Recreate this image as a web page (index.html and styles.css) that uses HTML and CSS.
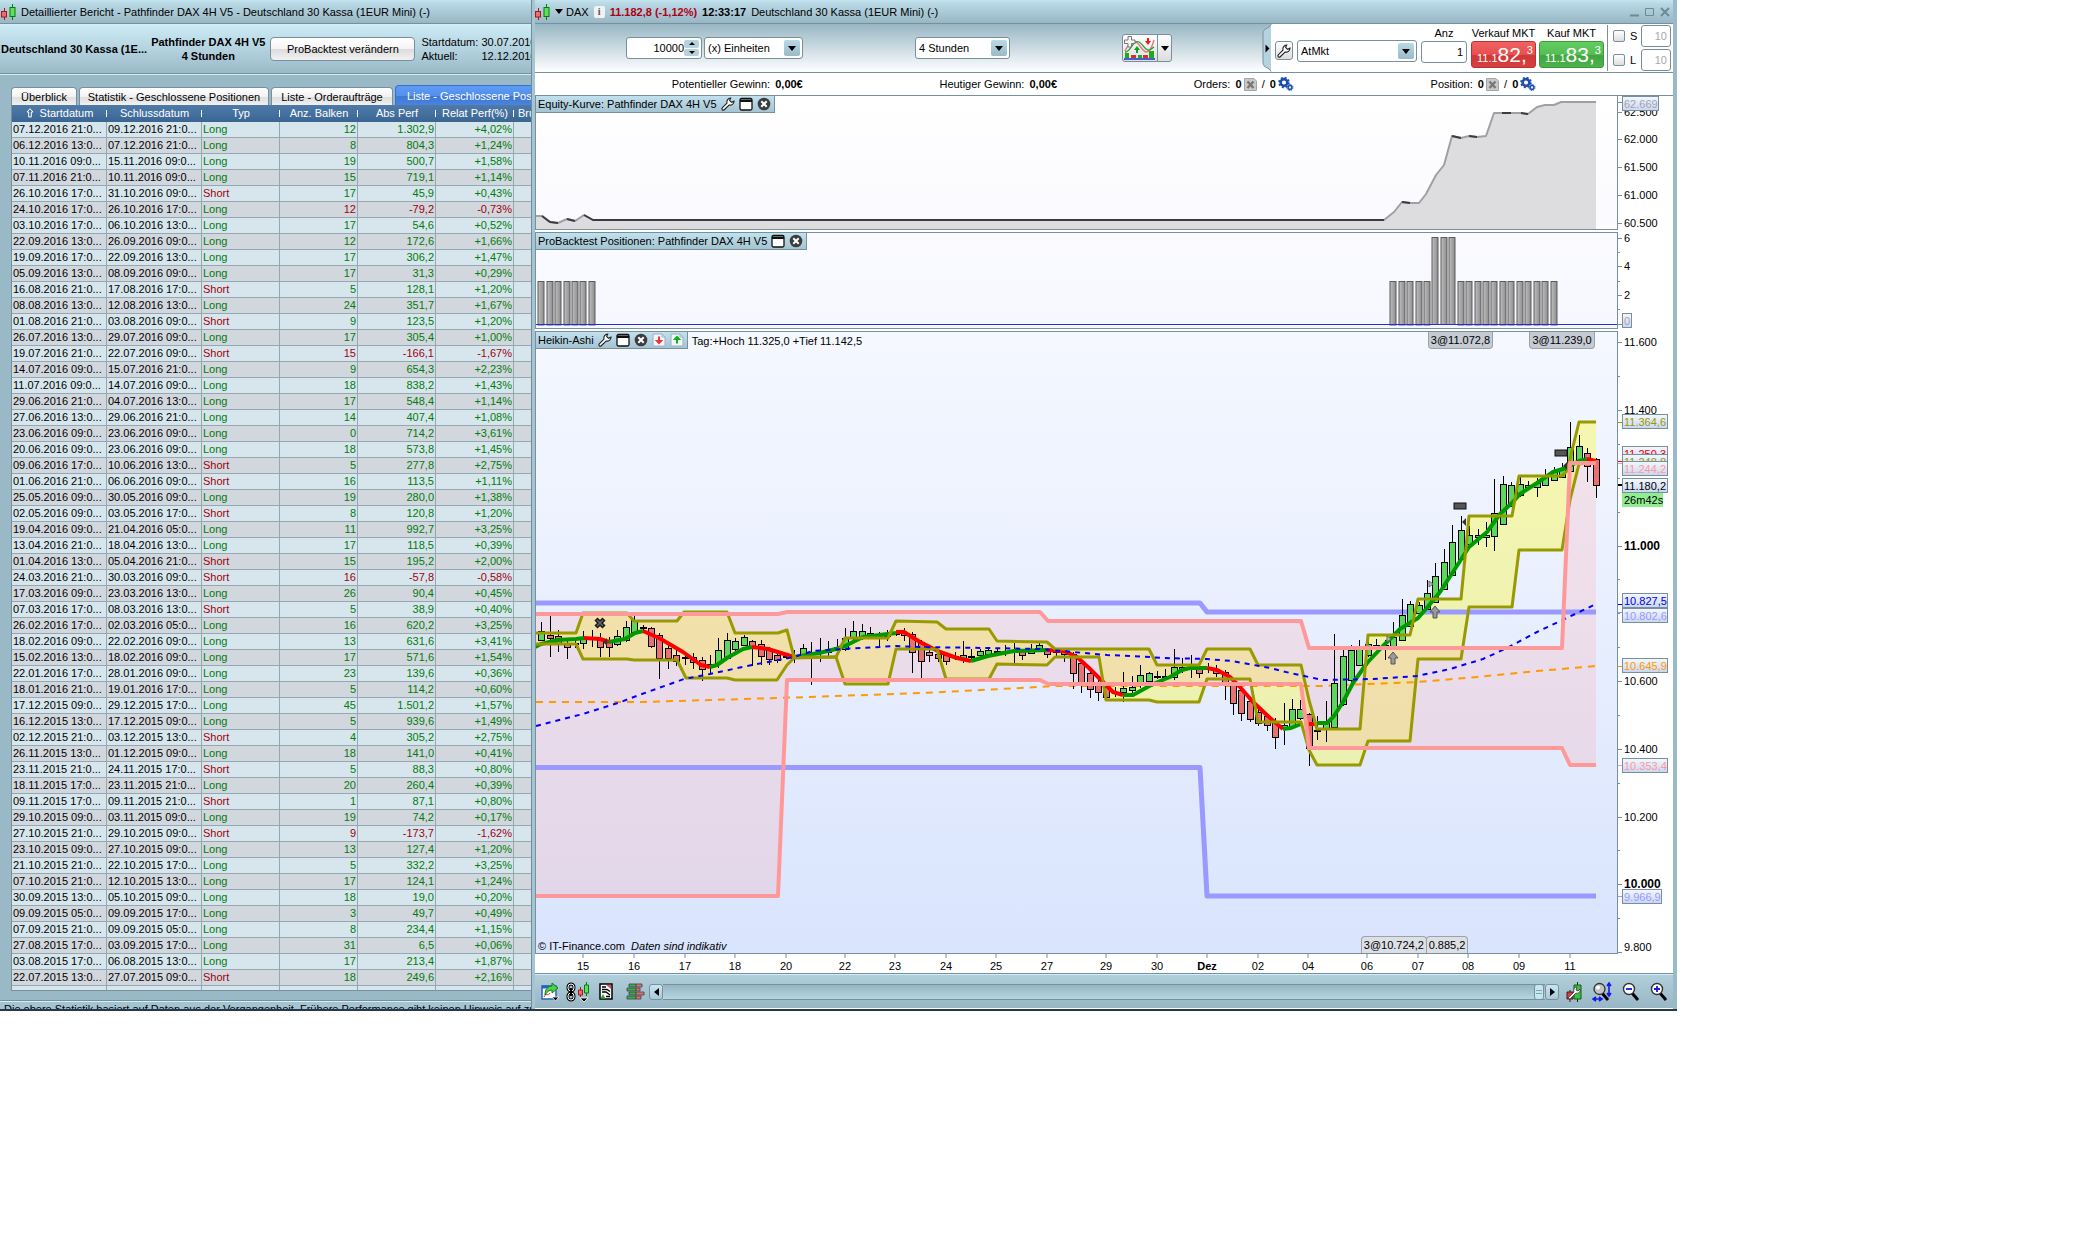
FILE: index.html
```html
<!DOCTYPE html>
<html lang="de">
<head>
<meta charset="utf-8">
<title>DAX - Deutschland 30 Kassa</title>
<link rel="stylesheet" href="styles.css">
</head>
<body>
<svg class="sprite" aria-hidden="true">
  <symbol id="i-candles" viewBox="0 0 15 16"><path d="M3.500 4v12" stroke="#a01820"/><rect x=".5" y="7.500" width="5" height="5.500" fill="#f26a6a" stroke="#a01820"/><path d="M11.500 0v16" stroke="#0a7a10"/><rect x="9" y="3.500" width="5" height="9" fill="#5fe05a" stroke="#0a7a10"/></symbol>
  <symbol id="i-wrench" viewBox="0 0 14 14"><path d="M1.200 12.800c-.6-.9-.4-1.500.3-2.200L6 6.100C5.400 3.500 7 1.200 9.700 1L8.600 3.400l1.900 1.900L13 4.200c0 2.700-2.300 4.400-4.900 3.800l-4.600 4.500c-.8.8-1.600.9-2.300.3z" fill="#fff" stroke="#222" stroke-width="1.100"/></symbol>
  <symbol id="i-window" viewBox="0 0 14 14"><rect x="1" y="1.500" width="12" height="11.500" rx="1.500" fill="#fff" stroke="#111" stroke-width="1.300"/><path d="M1 2.500h12v2.500H1z" fill="#111"/></symbol>
  <symbol id="i-close" viewBox="0 0 14 14"><circle cx="7" cy="7" r="6.300" fill="#3c3c3c"/><path d="M4.300 4.300l5.400 5.400M9.700 4.300l-5.400 5.400" stroke="#fff" stroke-width="2"/></symbol>
  <symbol id="i-down-red" viewBox="0 0 14 14"><path d="M1 1h9l3 3v9H1z" fill="#f2f6fb" stroke="#9fb0c4"/><path d="M10 1v3h3" fill="none" stroke="#9fb0c4"/><path d="M7 11.500L2.800 7H6V3.500h2V7h3.200z" fill="#ee3434"/></symbol>
  <symbol id="i-up-green" viewBox="0 0 14 14"><path d="M1 1h9l3 3v9H1z" fill="#f2f6fb" stroke="#9fb0c4"/><path d="M10 1v3h3" fill="none" stroke="#9fb0c4"/><path d="M7 2.500L11.200 7H8v3.500H6V7H2.800z" fill="#10b010"/></symbol>
  <symbol id="i-sheet" viewBox="0 0 13 13"><path d="M.5.5h9.500l2.500 2.500v9.500H.5z" fill="#c9c9c9" stroke="#a4a4a4"/><path d="M3.500 3.500l6 6.500M9.500 3.500l-6 6.500" stroke="#777" stroke-width="2.400"/></symbol>
  <symbol id="i-gears" viewBox="0 0 16 14"><circle cx="6" cy="5.500" r="3.400" fill="none" stroke="#1b4fae" stroke-width="2.600"/><circle cx="6" cy="5.500" r="5" fill="none" stroke="#1b4fae" stroke-width="1.600" stroke-dasharray="2 1.930"/><circle cx="12" cy="10.500" r="1.900" fill="#e6efff" stroke="#1b4fae" stroke-width="1.500"/><circle cx="12" cy="10.500" r="3" fill="none" stroke="#1b4fae" stroke-width="1" stroke-dasharray="1.300 1.060"/></symbol>
</svg>

<main class="workspace">
  <section class="report" aria-label="Detaillierter Bericht">
    <header class="titlebar">
      <svg class="candles"><use href="#i-candles"/></svg>
      <span>Detaillierter Bericht - Pathfinder DAX 4H V5 - Deutschland 30 Kassa (1EUR Mini) (-)</span>
    </header>
    <div class="report-head">
      <strong>Deutschland 30 Kassa (1E...</strong>
      <strong class="system">Pathfinder DAX 4H V5<br>4 Stunden</strong>
      <button class="modify" type="button">ProBacktest verändern</button>
      <dl class="dates"><dt>Startdatum:</dt><dd>30.07.2010</dd><dt>Aktuell:</dt><dd>12.12.2016</dd></dl>
    </div>
    <div class="report-body">
      <div class="tabs" role="tablist">
        <button role="tab" type="button" class="tab tab-a">Überblick</button>
        <button role="tab" type="button" class="tab tab-b">Statistik - Geschlossene Positionen</button>
        <button role="tab" type="button" class="tab tab-c">Liste - Orderaufträge</button>
        <button role="tab" type="button" class="tab active" aria-selected="true">Liste - Geschlossene Positionen</button>
      </div>
      <div class="table-box">
        <table>
          <colgroup><col class="c-date"><col class="c-date"><col class="c-num"><col class="c-num"><col class="c-num"><col class="c-num"><col class="c-num"></colgroup>
          <thead><tr><th><svg class="sort" viewBox="0 0 8 10"><path d="M4 .7l3 3.300H5.300V9H2.700V4H1z" fill="none" stroke="#fff"/></svg>Startdatum</th><th>Schlussdatum</th><th>Typ</th><th>Anz. Balken</th><th>Abs Perf</th><th>Relat Perf(%)</th><th class="cut">Bruttogewinn</th></tr></thead>
          <tbody id="trades"></tbody>
        </table>
      </div>
    </div>
    <footer class="disclaimer">Die obere Statistik basiert auf Daten aus der Vergangenheit. Frühere Performance gibt keinen Hinweis auf zukünftige Ergebnisse.</footer>
  </section>

  <section class="chart-window" aria-label="DAX Chart">
    <header class="titlebar">
      <svg class="candles"><use href="#i-candles"/></svg>
      <span class="tri"></span>
      <span>DAX</span>
      <span class="info">i</span>
      <b class="down">11.182,8 (-1,12%)</b>
      <b>12:33:17</b>
      <span>Deutschland 30 Kassa (1EUR Mini) (-)</span>
      <span class="win-buttons">
        <button type="button" aria-label="Minimieren"><svg viewBox="0 0 10 10"><path d="M0 8.500h9" stroke="#6d8a96" stroke-width="2"/></svg></button>
        <button type="button" aria-label="Maximieren"><svg viewBox="0 0 10 10"><path d="M.5 1.500h8v7h-8z" fill="none" stroke="#6d8a96"/></svg></button>
        <button type="button" aria-label="Schließen"><svg viewBox="0 0 10 10"><path d="M1 1l8 8M9 1l-8 8" stroke="#6d8a96" stroke-width="2"/></svg></button>
      </span>
    </header>

    <div class="toolbar">
      <div class="chart-tools">
        <div class="units">
          <span class="spin field"><input aria-label="Anzahl" value="10000"><span class="steps"><button type="button" aria-label="mehr"><i class="up"></i></button><button type="button" aria-label="weniger"><i class="dn"></i></button></span></span>
          <span class="pick field w-unit"><select aria-label="Einheit"><option>(x) Einheiten</option></select></span>
        </div>
        <span class="pick field w-time"><select aria-label="Zeitrahmen"><option>4 Stunden</option></select></span>
        <button class="indicator" type="button" aria-label="Indikatoren">
          <svg viewBox="0 0 34 26"><path d="M2 16C8 4 13 5 17 11s9 12 14-6" fill="none" stroke="#e08080" stroke-width="1.500"/><path d="M2 17c6 0 8-13 14-10s6 13 15 5" fill="none" stroke="#2a9a30" stroke-width="1.300"/><path d="M5 1.500h3.500V5H12v3.500H8.500V12H5V8.500H1.500V5H5z" fill="#f4f4f4" stroke="#777"/><path d="M24 3h2v3h2l-3 4-3-4h2z" fill="#f01818"/><path d="M13 18v-3h-2l3-4 3 4h-2v3z" fill="#0fa018"/><path d="M2 18h4v5H2zM15 20h4v3h-4zM26 16h5v7h-5z" fill="#1caa20"/><path d="M8 20h5v3H8zM20 20h5v3h-5z" fill="#d03030"/><path d="M1 24h31" stroke="#2030c0" stroke-width="1.500"/></svg>
          <span class="more"><i class="dn big"></i></span>
        </button>
      </div>
      <div class="trade">
        <svg class="handle" viewBox="0 0 16 47" aria-hidden="true"><path d="M9 0C7 5 1 3 1 9v29c0 6 6 4 8 9h7V0z" fill="#fff"/><path d="M9 0C7 5 1 3 1 9v29c0 6 6 4 8 9z" fill="#b4d3df"/><path d="M9 0C7 5 1 3 1 9v29c0 6 6 4 8 9" fill="none" stroke="#76919d"/><path d="M3.500 20v8l4-4z" fill="#000"/></svg>
        <button class="tool" type="button" aria-label="Einstellungen"><svg viewBox="0 0 14 14"><use href="#i-wrench"/></svg></button>
        <span class="pick field w-order"><select aria-label="Ordertyp"><option>AtMkt</option></select></span>
        <label class="col qty">Anz<input class="field" value="1"></label>
        <div class="col"><span>Verkauf MKT</span><button class="deal sell" type="button"><small>11.1</small>82,<sup>3</sup></button></div>
        <div class="col"><span>Kauf MKT</span><button class="deal buy" type="button"><small>11.1</small>83,<sup>3</sup></button></div>
        <div class="stops">
          <div><input type="checkbox" id="st"><label for="st">S</label><input class="field" aria-label="Stop" value="10" disabled></div>
          <div><input type="checkbox" id="lm"><label for="lm">L</label><input class="field" aria-label="Limit" value="10" disabled></div>
        </div>
      </div>
    </div>

    <div class="status">
      <span>Potentieller Gewinn: <b>0,00€</b></span>
      <span>Heutiger Gewinn: <b>0,00€</b></span>
      <span>Orders: <b>0</b><svg class="ic-sheet"><use href="#i-sheet"/></svg> / <b>0</b><svg class="ic-gears"><use href="#i-gears"/></svg></span>
      <span>Position: <b>0</b><svg class="ic-sheet"><use href="#i-sheet"/></svg> / <b>0</b><svg class="ic-gears"><use href="#i-gears"/></svg></span>
    </div>

    <div class="pane equity">
      <div class="plot"><svg id="equity" viewBox="536 96 1081 133" preserveAspectRatio="none"></svg>
        <div class="legend">Equity-Kurve: Pathfinder DAX 4H V5<svg><use href="#i-wrench"/></svg><svg><use href="#i-window"/></svg><svg><use href="#i-close"/></svg></div>
      </div>
      <svg class="axis" id="axis1" viewBox="1617 96 55 136"></svg>
    </div>
    <div class="pane positions">
      <div class="plot"><svg id="positions" viewBox="536 233 1081 95" preserveAspectRatio="none"></svg>
        <div class="legend">ProBacktest Positionen: Pathfinder DAX 4H V5<svg><use href="#i-window"/></svg><svg><use href="#i-close"/></svg></div>
      </div>
      <svg class="axis" id="axis2" viewBox="1617 233 55 98"></svg>
    </div>
    <div class="pane price">
      <div class="plot"><svg id="price" viewBox="536 332 1081 621" preserveAspectRatio="none"></svg>
        <div class="legend-row"><div class="legend">Heikin-Ashi<svg><use href="#i-wrench"/></svg><svg><use href="#i-window"/></svg><svg><use href="#i-close"/></svg><svg><use href="#i-down-red"/></svg><svg><use href="#i-up-green"/></svg></div><span>Tag:+Hoch 11.325,0 +Tief 11.142,5</span></div>
        <span class="fill top f1">3@11.072,8</span><span class="fill top f2">3@11.239,0</span>
        <span class="fill bottom f4">0.885,2</span><span class="fill bottom f3">3@10.724,2</span>
        <div class="credit">© IT-Finance.com&nbsp; <em>Daten sind indikativ</em></div>
      </div>
      <svg class="axis" id="axis3" viewBox="1617 332 55 622"></svg>
    </div>
    <svg class="time-axis" id="days"></svg>

    <div class="bottom-bar">
      <button class="plain" type="button" aria-label="Exportieren"><svg width="20" height="20" viewBox="0 0 20 20"><path d="M2 4h14v13H2z" fill="#fff" stroke="#2a62c0" stroke-width="1.500"/><path d="M2 5h14" stroke="#2a62c0" stroke-width="3"/><path d="M4 15c2-5 4 0 6-4" fill="none" stroke="#d03030"/><path d="M5 13C5 7 8 4 12 4V1l6 5-6 5V8c-3 0-5 2-7 5z" fill="#4ed24c" stroke="#137a15"/><path d="M12 15h7l-3.500 4z" fill="#000" stroke="#fff" stroke-width=".8"/></svg></button>
      <button class="plain" type="button" aria-label="Verknüpfen"><svg width="24" height="20" viewBox="0 0 24 20"><rect x="2" y="2" width="6" height="7" rx="3" fill="none" stroke="#000" stroke-width="3"/><rect x="2" y="11" width="6" height="7" rx="3" fill="none" stroke="#000" stroke-width="3"/><rect x="2" y="2" width="6" height="7" rx="3" fill="none" stroke="#fff"/><rect x="2" y="11" width="6" height="7" rx="3" fill="none" stroke="#fff"/><path d="M5 6v8" stroke="#000" stroke-width="2"/><path d="M14.500 5v10" stroke="#a01820"/><path d="M12.500 8h4v5h-4z" fill="#f26a6a" stroke="#a01820"/><path d="M20.500 0v14" stroke="#0a7a10"/><path d="M18.500 3h4v8h-4z" fill="#5fe05a" stroke="#0a7a10"/><path d="M14 16h8l-4 4z" fill="#000" stroke="#fff" stroke-width=".8"/></svg></button>
      <button class="plain gap-s" type="button" aria-label="Liste"><svg width="14" height="17" viewBox="0 0 14 17"><path d="M1 1h12v15H1z" fill="#fff" stroke="#000" stroke-width="1.500"/><path d="M3 4h4M3 6.500h5l3 2M3 9h4l4 3M7 13.500h4" fill="none" stroke="#000" stroke-width="1.400"/><path d="M7 2h5v4z" fill="#e05050"/><path d="M1.500 15.500h5L4 11z" fill="#2aaa2a"/></svg></button>
      <button class="plain gap-m" type="button" aria-label="Orderbuch"><svg width="19" height="18" viewBox="0 0 19 18"><path d="M3 1h7v3H3zM1 5h9v3H1zM3 9h7v3H3zM1 13h9v3H1z" fill="#33b04a" stroke="#4a4a4a" stroke-width=".9"/><path d="M10 1h6v3h-6zM10 5h4v3h-4zM10 9h8v3h-8zM10 13h5v3h-5z" fill="#e07070" stroke="#4a4a4a" stroke-width=".9"/></svg></button>
      <div class="scroll"><button type="button" aria-label="zurück"><i class="lf"></i></button><div class="track"><span class="thumb"></span></div><button type="button" aria-label="vor"><i class="rt"></i></button></div>
      <button class="plain" type="button" aria-label="Chart einstellen"><svg width="16" height="20" viewBox="0 0 16 20"><path d="M4 8v12M11.500 0v20" stroke="#222"/><path d="M1 10h6v7H1z" fill="#d04040" stroke="#5a1515"/><path d="M8 3h7v14H8z" fill="#3fbf45" stroke="#145a18"/><path d="M2 16l6-6c-1-3 1-5 3-5l-1 3 2 1 2-2c1 3-2 5-4 4l-6 6z" fill="#fff" stroke="#333" stroke-width=".8"/></svg></button>
      <button class="plain gap-z" type="button" aria-label="Automatisch zoomen"><svg width="20" height="20" viewBox="0 0 20 20"><path d="M10 11l6 7" stroke="#000" stroke-width="3"/><circle cx="7.500" cy="7" r="5.500" fill="#c4c4c4" stroke="#333" stroke-width="1.300"/><circle cx="6" cy="5.500" r="2" fill="#fff"/><path d="M17 1v12M15 4l2-3 2 3M15 11l2 3 2-3M1 17h9M4 15l-3 2 3 2M7 15l3 2-3 2" fill="none" stroke="#1418e8" stroke-width="1.600"/></svg></button>
      <button class="plain gap-z" type="button" aria-label="Verkleinern"><svg width="18" height="20" viewBox="0 0 18 20"><path d="M10 11l6 7" stroke="#000" stroke-width="3"/><circle cx="7" cy="7" r="5.500" fill="#fff" stroke="#333" stroke-width="1.400"/><path d="M4 7h6" stroke="#1418e8" stroke-width="1.800"/></svg></button>
      <button class="plain gap-z" type="button" aria-label="Vergrößern"><svg width="18" height="20" viewBox="0 0 18 20"><path d="M10 11l6 7" stroke="#000" stroke-width="3"/><circle cx="7" cy="7" r="5.500" fill="#fff" stroke="#333" stroke-width="1.400"/><path d="M4 7h6M7 4v6" stroke="#1418e8" stroke-width="1.800"/></svg></button>
    </div>
  </section>
</main>
<script src="app.js"></script>
</body>
</html>
```
FILE: styles.css
```css
* { box-sizing: border-box; }
body { margin: 0; background: #fff; color: #000; font: 11px/14px "Liberation Sans", Arial, sans-serif; }
button, input, select { font: inherit; color: inherit; margin: 0; padding: 0; }
button { cursor: pointer; border: 0; background: none; }
.sprite { display: none; }
svg { display: block; }

.workspace { display: flex; margin-right: 423px; border-bottom: 2px solid #26384c; }

.titlebar { display: flex; align-items: center; gap: 5px; height: 24px; border-bottom: 1px solid #76919d; background: linear-gradient(#c4e4f0, #b7d6e3 20%, #98b6c3); white-space: nowrap; }
.candles { width: 15px; height: 16px; flex: none; }

/* report window */
.report { flex: 0 0 532px; height: 1009px; overflow: hidden; display: flex; flex-direction: column; background: #9ab9c7; border-right: 1px solid #6f8c98; }
.report .titlebar { padding-left: 1px; flex: none; }
.report-head { flex: none; height: 50px; display: flex; align-items: center; border-top: 1px solid #d4eef8; border-bottom: 1px solid #76919d; background: linear-gradient(#cdebf7, #9bbac7); white-space: nowrap; padding-left: 1px; }
.system { text-align: center; margin: 0 5px 0 4px; }
.modify { flex: none; width: 145px; height: 24px; border: 1px solid #76919d; border-radius: 4px; background: linear-gradient(#fff, #f4f4f4 50%, #dcdcdc 52%, #f2f2f2); }
.dates { display: grid; grid-template-columns: 60px auto; margin: 0 0 0 6px; }
.dates dd { margin: 0; }
.report-body { flex: none; height: 926px; padding: 10px 0 0 11px; border-top: 1px solid #d4eef8; }
.tabs { display: flex; align-items: flex-end; height: 20px; gap: 2px; white-space: nowrap; }
.tab { flex: none; height: 18px; border: 1px solid #76919d; border-bottom: 0; border-radius: 4px 4px 0 0; background: linear-gradient(#fff, #f2f2f2 50%, #dedede 52%, #f0f0f0); }
.tab-a { width: 66px; }
.tab-b { width: 190px; }
.tab-c { width: 122px; }
.tab.active { height: 20px; padding: 0 11px; color: #fff; border-color: #3a6fd0; background: linear-gradient(#5c9cf5, #5590ec 50%, #3f78d4 52%, #4a84e0); }
.table-box { height: 886px; overflow: hidden; border-left: 1px solid #76919d; border-bottom: 1px solid #76919d; }
table { border-collapse: separate; border-spacing: 0; table-layout: fixed; width: 580px; }
.c-date { width: 95px; }
.c-num { width: 78px; }
th, td { height: 16px; padding: 0 1px; line-height: 15px; white-space: nowrap; overflow: hidden; }
th { position: relative; height: 17px; color: #fff; font-weight: 400; text-align: center; background: linear-gradient(#4f7aa6, #4571a0 50%, #3a6591); }
th::after { content: ""; position: absolute; right: 0; top: 5px; width: 1px; height: 7px; background: #fff; }
th.cut { text-align: left; padding-left: 4px; }
.sort { display: inline-block; width: 8px; height: 10px; margin-right: 6px; vertical-align: -1px; }
td { border-right: 1px solid #93a8b3; border-bottom: 1px solid #93a8b3; color: #007c0c; }
td:nth-child(-n+2) { color: #000; }
td:nth-child(n+4) { text-align: right; }
tbody tr:nth-child(odd) { background: #d7e6ed; }
tbody tr:nth-child(even) { background: #d1d7dd; }
td.neg { color: #a0000f; }
.disclaimer { flex: none; height: 20px; padding: 1px 4px; border-top: 1px solid #76919d; background: #a4c4d1; white-space: nowrap; box-shadow: inset 0 1px #d4eef8; }

/* chart window */
.chart-window { flex: 1; min-width: 0; border-left: 3px solid #a5c5d2; border-right: 4px solid #9bbac7; background: #fff; }
.tri { border: 4px solid transparent; border-top: 5px solid #000; border-bottom: 0; margin-right: -2px; }
.info { width: 11px; height: 12px; border-radius: 2px; background: #f2f2f2; color: #555; font: bold 10px/12px "Liberation Serif", serif; text-align: center; }
.down { color: #b00010; }
.win-buttons { margin-left: auto; display: flex; gap: 5px; padding-right: 3px; }
.win-buttons svg { width: 10px; height: 10px; }

.toolbar { display: flex; align-items: center; justify-content: space-between; height: 49px; padding-left: 91px; border-bottom: 1px solid #76919d; background: linear-gradient(#98b7c4, #fff); }
.chart-tools { flex: none; display: flex; align-items: center; gap: 112px; }
.units { display: flex; gap: 2px; }
.field { height: 22px; border: 1px solid #76919d; border-radius: 3px; background: #fff; }
.field input, .field select { border: 0; outline: 0; background: transparent; width: 100%; height: 20px; }
.spin { display: flex; width: 76px; }
.spin input { width: 57px; text-align: right; }
.steps { width: 15px; display: grid; gap: 1px; padding: 2px 0; }
.steps button { background: #b4d3df; border-radius: 2px; display: grid; place-items: center; }
.pick { position: relative; display: block; flex: none; }
.pick select { appearance: none; padding-left: 3px; }
.pick::before { content: ""; position: absolute; right: 2px; top: 2px; width: 16px; height: 16px; border-radius: 2px; background: linear-gradient(#b9d9e6, #9bbac7); pointer-events: none; }
.pick::after { content: ""; position: absolute; right: 6px; top: 8px; border: 4px solid transparent; border-top: 5px solid #000; border-bottom: 0; pointer-events: none; }
.w-unit { width: 99px; }
.w-time { width: 95px; }
.w-order { width: 120px; margin: 0 4px 10px; }
i { display: block; border: 3px solid transparent; width: 0; height: 0; }
i.up { border-bottom: 3px solid #000; border-top: 0; }
i.dn { border-top: 3px solid #000; border-bottom: 0; }
i.big { border-width: 5px 4px 0; }
i.lf { border: 4px solid transparent; border-right: 5px solid #000; border-left: 0; margin: auto; }
i.rt { border: 4px solid transparent; border-left: 5px solid #000; border-right: 0; margin: auto; }
.indicator { flex: none; display: flex; width: 50px; height: 28px; border: 1px solid #76919d; border-radius: 3px; background: linear-gradient(#fff, #ddd); }
.indicator svg { width: 34px; height: 26px; }
.more { flex: 1; border-left: 1px solid #76919d; display: grid; place-items: center; height: 26px; }

.trade { flex: none; display: flex; align-items: flex-end; width: 411px; height: 48px; background: linear-gradient(90deg, transparent 10px, #fff 10px); }
.handle { width: 16px; height: 48px; margin-right: -3px; }
.tool { width: 18px; height: 19px; margin-bottom: 12px; border: 1px solid #76919d; border-radius: 3px; background: linear-gradient(#fff, #ddd); display: grid; place-items: center; }
.tool svg { width: 14px; height: 14px; }
.col { display: flex; flex-direction: column; align-items: center; gap: 1px; height: 46px; white-space: nowrap; margin-left: 3px; }
.qty { width: 46px; margin: 0 1px 0 0; }
.qty input { width: 46px; text-align: right; padding-right: 3px; }
.deal { width: 65px; height: 27px; border-radius: 3px; color: #fff; font-size: 21px; line-height: 26px; text-align: left; padding-left: 5px; white-space: nowrap; }
.deal small, .deal sup { font-size: 11px; line-height: 11px; }
.deal sup { vertical-align: 8px; }
.sell { background: linear-gradient(#f06262, #e85050 50%, #d03838 52%, #d84040); border: 1px solid #c03030; }
.buy { background: linear-gradient(#62cc62, #54be54 50%, #40a440 52%, #4cb44c); border: 1px solid #3a9a3a; }
.stops { align-self: center; display: grid; gap: 2px; margin-left: 3px; padding-left: 5px; border-left: 1px solid #76919d; height: 46px; }
.stops div { display: flex; align-items: center; }
.stops input[type=checkbox] { appearance: none; width: 12px; height: 12px; border: 1px solid #76919d; border-radius: 2px; background: linear-gradient(#fff, #ddd); }
.stops label { width: 16px; padding-left: 5px; }
.stops input.field { width: 30px; text-align: right; padding-right: 3px; color: #a8a8a8; }

.status { display: flex; justify-content: space-evenly; align-items: center; height: 23px; border-bottom: 1px solid #76919d; white-space: pre; }
.status span { display: flex; align-items: center; gap: 2px; }
.ic-sheet { width: 13px; height: 13px; }
.ic-gears { width: 16px; height: 14px; }

.pane { display: flex; }
.plot { position: relative; flex: 1; min-width: 0; border: 1px solid #76919d; border-top: 0; }
.plot > svg { width: 100%; height: 100%; }
.axis { flex: none; width: 55px; font-size: 11px; }
.equity .plot { height: 134px; background: linear-gradient(#fff, #fafaff); }
.equity { height: 136px; }
.equity .axis { height: 136px; }
.positions .plot, .price .plot { border-top: 1px solid #76919d; }
.positions { height: 99px; }
.positions .plot { height: 97px; background: linear-gradient(#fafaff, #f6f8ff); }
.positions .axis { height: 98px; margin-top: 1px; }
.price { height: 623px; }
.price .plot { background: linear-gradient(#f5f8ff, #d9e4fd); }
.price .axis { height: 622px; margin-top: 1px; }
.legend { position: absolute; left: 0; top: 0; display: flex; align-items: center; gap: 4px; height: 17px; padding: 0 3px 0 2px; border: solid #76919d; border-width: 0 1px 1px 0; background: linear-gradient(#c2e1ee, #a4c4d1); white-space: nowrap; }
.legend svg { width: 14px; height: 14px; }
.price .legend svg { width: 14px; }
.legend-row { position: absolute; left: 0; top: 0; display: flex; align-items: center; gap: 4px; white-space: nowrap; }
.legend-row .legend { position: static; }
.fill { position: absolute; height: 17px; padding: 0 2px; line-height: 16px; border: 1px solid #9aa3aa; }
.top { top: 0; border-top: 0; border-radius: 0 0 4px 4px; background: #c5cad3; }
.bottom { bottom: 0; border-bottom: 0; border-radius: 4px 4px 0 0; background: #dcdfe4; }
.f1 { left: 82.500%; }
.f2 { left: 91.900%; }
.f3 { left: 76.300%; }
.f4 { left: 82.300%; }
.credit { position: absolute; left: 2px; bottom: 0; }
.time-axis { width: 100%; height: 20px; font-size: 11px; border-bottom: 1px solid #76919d; }

.bottom-bar { display: flex; align-items: center; height: 34px; padding: 0 5px; border-top: 1px solid #d4eef8; background: linear-gradient(#b0cfdb, #98b6c3); }
.plain { flex: none; margin-right: 6px; }
.gap-s { margin-left: 3px; margin-right: 9px; }
.gap-m { margin-left: 4px; margin-right: 4px; }
.gap-z { margin-left: 4px; }
.bottom-bar .plain:last-child { margin-right: 0; }
.scroll { flex: 1; display: flex; height: 16px; margin-right: 7px; }
.scroll button { width: 14px; border: 1px solid #76919d; border-radius: 3px; background: linear-gradient(#c8e6f2, #a9c9d6); }
.track { flex: 1; display: flex; justify-content: flex-end; border: solid #76919d; border-width: 1px 0; background: linear-gradient(#96b5c2, #b6d6e2); }
.thumb { width: 10px; margin: -1px 1px -1px 0; border: 1px solid #76919d; border-radius: 3px; background: repeating-linear-gradient(#c8e6f2 0 2px, #86a3b0 2px 3px) content-box, #c8e6f2; padding: 3px 1px; }
```
FILE: app.js
```js
// start | end | type | bars | absolute | relative
const TRADES = `07.12.2016 21|09.12.2016 21|L|12|1.302,9|+4,02
06.12.2016 13|07.12.2016 21|L|8|804,3|+1,24
10.11.2016 09|15.11.2016 09|L|19|500,7|+1,58
07.11.2016 21|10.11.2016 09|L|15|719,1|+1,14
26.10.2016 17|31.10.2016 09|S|17|45,9|+0,43
24.10.2016 17|26.10.2016 17|L|12|-79,2|-0,73
03.10.2016 17|06.10.2016 13|L|17|54,6|+0,52
22.09.2016 13|26.09.2016 09|L|12|172,6|+1,66
19.09.2016 17|22.09.2016 13|L|17|306,2|+1,47
05.09.2016 13|08.09.2016 09|L|17|31,3|+0,29
16.08.2016 21|17.08.2016 17|S|5|128,1|+1,20
08.08.2016 13|12.08.2016 13|L|24|351,7|+1,67
01.08.2016 21|03.08.2016 09|S|9|123,5|+1,20
26.07.2016 13|29.07.2016 09|L|17|305,4|+1,00
19.07.2016 21|22.07.2016 09|S|15|-166,1|-1,67
14.07.2016 09|15.07.2016 21|L|9|654,3|+2,23
11.07.2016 09|14.07.2016 09|L|18|838,2|+1,43
29.06.2016 21|04.07.2016 13|L|17|548,4|+1,14
27.06.2016 13|29.06.2016 21|L|14|407,4|+1,08
23.06.2016 09|23.06.2016 09|L|0|714,2|+3,61
20.06.2016 09|23.06.2016 09|L|18|573,8|+1,45
09.06.2016 17|10.06.2016 13|S|5|277,8|+2,75
01.06.2016 21|06.06.2016 09|S|16|113,5|+1,11
25.05.2016 09|30.05.2016 09|L|19|280,0|+1,38
02.05.2016 09|03.05.2016 17|S|8|120,8|+1,20
19.04.2016 09|21.04.2016 05|L|11|992,7|+3,25
13.04.2016 21|18.04.2016 13|L|17|118,5|+0,39
01.04.2016 13|05.04.2016 21|S|15|195,2|+2,00
24.03.2016 21|30.03.2016 09|S|16|-57,8|-0,58
17.03.2016 09|23.03.2016 13|L|26|90,4|+0,45
07.03.2016 17|08.03.2016 13|S|5|38,9|+0,40
26.02.2016 17|02.03.2016 05|L|16|620,2|+3,25
18.02.2016 09|22.02.2016 09|L|13|631,6|+3,41
15.02.2016 13|18.02.2016 09|L|17|571,6|+1,54
22.01.2016 17|28.01.2016 09|L|23|139,6|+0,36
18.01.2016 21|19.01.2016 17|L|5|114,2|+0,60
17.12.2015 09|29.12.2015 17|L|45|1.501,2|+1,57
16.12.2015 13|17.12.2015 09|L|5|939,6|+1,49
02.12.2015 21|03.12.2015 13|S|4|305,2|+2,75
26.11.2015 13|01.12.2015 09|L|18|141,0|+0,41
23.11.2015 21|24.11.2015 17|S|5|88,3|+0,80
18.11.2015 17|23.11.2015 21|L|20|260,4|+0,39
09.11.2015 17|09.11.2015 21|S|1|87,1|+0,80
29.10.2015 09|03.11.2015 09|L|19|74,2|+0,17
27.10.2015 21|29.10.2015 09|S|9|-173,7|-1,62
23.10.2015 09|27.10.2015 09|L|13|127,4|+1,20
21.10.2015 21|22.10.2015 17|L|5|332,2|+3,25
07.10.2015 21|12.10.2015 13|L|17|124,1|+1,24
30.09.2015 13|05.10.2015 09|L|18|19,0|+0,20
09.09.2015 05|09.09.2015 17|L|3|49,7|+0,49
07.09.2015 21|09.09.2015 05|L|8|234,4|+1,15
27.08.2015 17|03.09.2015 17|L|31|6,5|+0,06
03.08.2015 17|06.08.2015 13|L|17|213,4|+1,87
22.07.2015 13|27.07.2015 09|S|18|249,6|+2,16`.split("\n").map(r => r.split("|"));

document.getElementById("trades").innerHTML = TRADES.map(([a, b, t, n, abs, rel]) => {
  const c = abs[0] === "-" ? ' class="neg"' : "";
  return `<tr><td>${a}:0...</td><td>${b}:0...</td><td${t === "S" ? ' class="neg">Short' : ">Long"}</td><td${c}>${n}</td><td${c}>${abs}</td><td${c}>${rel}%</td><td></td></tr>`;
}).join("") + "<tr>" + "<td></td>".repeat(7) + "</tr>";

const put = (id, html) => { document.getElementById(id).innerHTML = html; };
const line = (p, color, w, extra = "") => `<polyline points="${p}" fill="none" stroke="${color}" stroke-width="${w}" stroke-linejoin="round" ${extra}/>`;
const barX = i => Math.round(541.3 + 8.435 * i);

// equity curve
const eq = "535,216 542,216 550,222 558,223 567,219 575,221 584,215 593,220 1384,220 1394,212 1402,202 1410,203 1419,203 1426,194 1436,175 1444,165 1452,136 1461,138 1469,136 1477,137 1486,136 1494,113 1521,113 1528,114 1537,107 1545,105 1554,105 1561,102 1596,102";
const dark = ["542,216 550,222 558,223", "567,219 575,221", "584,215 593,220 1384,220", "1402,202 1410,203", "1452,136 1461,138", "1469,136 1477,137", "1502,113 1511,113", "1521,113 1528,114"];
put("equity", `<polygon points="${eq} 1596,230 535,230" fill="#dddddf"/>` + line(eq, "#a0a0a2", 2) + dark.map(d => line(d, "#3c3c3c", 2)).join(""));

// open positions
let bars = "";
const bar = (i, n) => { const h = n * 14.5; bars += `<rect x="${barX(i) - 3}" y="${Math.round(324 - h) + 0.5}" width="6" height="${h}" fill="url(#g)" stroke="#5c5c5c"/>`; };
for (let i = 0; i < 7; i++) bar(i, 3);
for (let i = 101; i < 121; i++) bar(i, i > 105 && i < 109 ? 6 : 3);
put("positions", `<defs><linearGradient id="g"><stop stop-color="#c0c0c0"/><stop offset="1" stop-color="#8c8c8c"/></linearGradient></defs>${bars}<path d="M536 324.500H1617" stroke="#2a2ae0"/>`);

// candles: high, body top, body bottom, low, direction
const CANDLES = `622 631 640 640 g,616 635 638 657 r,630 636 643 652 r,638 643 647 659 r,639 643 644 648 g,631 638 643 649 g,630 637 638 647 g,633 640 647 657 r,637 642 647 657 r,630 636 644 646 g,621 627 640 642 g,612 620 632 634 g,625 627 628 632 g,627 628 646 648 r,633 635 658 679 r,645 648 658 669 r,650 655 661 666 r,652 657 658 665 r,653 657 662 669 r,657 660 669 681 r,655 664 665 673 g,638 650 663 668 g,633 640 658 660 g,638 641 649 651 g,635 637 645 646 g,640 641 647 666 r,640 644 656 665 r,647 650 659 665 r,653 655 660 663 r,653 656 657 659 r,650 657 658 663 r,644 648 655 656 g,642 652 653 685 g,638 652 653 662 g,641 651 652 657 g,639 647 650 657 g,628 638 649 651 g,621 631 638 640 g,624 631 638 640 g,627 633 635 638 g,632 635 636 647 g,630 634 636 641 g,630 633 634 636 g,628 632 635 641 r,632 634 652 673 r,640 642 661 679 r,650 652 655 662 r,652 654 658 662 r,653 655 661 665 r,652 656 657 660 r,641 655 658 663 g,649 656 657 661 g,649 651 655 657 g,649 650 654 655 g,648 651 652 655 g,645 651 652 656 g,643 651 652 663 g,650 651 655 660 r,644 649 653 654 g,643 645 650 652 g,648 650 654 658 r,649 651 652 656 r,650 652 654 662 r,652 654 673 689 r,662 663 683 693 r,668 673 689 698 r,678 682 692 701 r,685 687 697 697 r,687 692 693 697 r,672 688 692 702 g,676 687 690 693 g,665 675 683 688 g,672 673 681 682 g,671 676 677 679 g,669 676 677 679 g,649 667 677 680 g,658 667 670 673 g,655 668 669 678 g,665 669 673 678 r,663 668 669 673 g,665 669 673 677 r,670 672 684 700 r,680 683 703 715 r,687 690 713 721 r,698 701 719 722 r,708 712 723 726 r,713 716 725 731 r,718 721 737 749 r,703 725 728 745 g,699 709 726 726 g,700 709 718 720 g,713 714 748 766 r,716 730 731 740 g,701 723 728 742 g,634 683 727 727 g,649 656 704 706 g,645 650 680 682 g,640 647 665 666 g,642 644 655 657 g,639 645 646 648 g,640 645 646 660 g,622 637 647 648 g,599 615 640 641 g,601 604 626 627 g,602 605 613 614 g,580 593 609 610 g,563 576 602 602 g,549 562 589 590 g,525 542 575 576 g,516 530 559 559 g,526 535 544 545 g,529 535 537 545 g,522 535 537 547 g,479 513 536 551 g,476 484 524 525 g,482 485 506 507 g,476 484 495 497 g,481 485 487 490 g,478 483 487 497 g,469 477 485 486 g,467 471 480 481 g,463 468 477 478 g,422 447 471 472 g,435 446 462 463 g,448 453 466 482 r,458 459 485 498 r`.split(",");
const candles = CANDLES.map((c, i) => {
  const [h, t, b, l, d] = c.split(" "), x = barX(i) + 0.5;
  return `<path d="M${x} ${h}V${l}" stroke="#000"/><rect x="${x - 3}" y="${+t + 0.5}" width="6" height="${b - t}" fill="${d === "g" ? "#5cd65c" : "#e87272"}" stroke="#000"/>`;
}).join("");

const up = { o: "535,633 576,633 583,613 627,613 634,621 677,621 684,612 727,612 735,633 778,633 787,630 794,657 836,657 845,638 888,638 896,621 937,622 946,629 989,629 997,641 1047,642 1055,649 1149,649 1157,665 1199,665 1207,649 1250,649 1258,665 1301,665 1309,700 1317,729 1360,729 1368,635 1410,635 1418,599 1461,599 1469,516 1512,516 1519,476 1562,476 1567,471 1579,422 1596,422",
  p: "535,614 778,614 787,612 1040,612 1048,621 1301,621 1309,648 1562,648 1570,463 1596,463" };
const lo = { o: "535,644 576,644 583,659 627,659 634,660 677,660 686,678 727,678 735,680 777,680 787,665 794,658 836,657 845,684 888,684 896,649 937,649 946,679 989,679 997,664 1047,665 1055,657 1099,657 1106,700 1149,700 1157,702 1199,702 1207,679 1250,679 1258,722 1301,722 1309,750 1317,765 1360,765 1368,741 1410,741 1418,659 1461,659 1469,607 1512,607 1519,550 1562,550 1570,500 1579,464 1596,462",
  p: "535,896 778,896 787,680 1040,680 1048,684 1301,684 1309,748 1562,748 1570,765 1596,765" };
const area = (k, f) => `<polygon points="${up[k]} ${lo[k].split(" ").reverse().join(" ")}" fill="${f}"/>`;

const AVG = [["g", "535,647 541,644 558,640 576,639 584,638"], ["r", "584,638 600,639 609,642"], ["g", "609,642 625,639 635,633 643,631"], ["r", "643,631 659,638 683,652 701,665 710,667"], ["g", "710,667 717,665 727,658 743,649 752,647"], ["r", "752,647 768,649 794,657"], ["g", "794,657 819,653 836,649 845,646 863,637 896,633"], ["r", "896,632 904,632 920,642 940,652 957,658 971,661"], ["g", "971,661 988,656 1014,651 1047,650"], ["r", "1047,650 1064,651 1077,657 1089,668 1103,682 1113,692 1123,695"], ["g", "1123,695 1133,695 1153,684 1170,677 1182,670 1190,668 1207,668"], ["r", "1207,668 1217,670 1230,677 1240,687 1253,702 1270,718 1283,729"], ["g", "1283,729 1291,728 1301,724"], ["r", "1309,724 1317,724"], ["g", "1317,723 1327,723 1334,716 1343,702 1353,683 1367,663 1383,646 1400,629 1418,618 1426,609 1440,592 1453,572 1469,547 1487,532 1500,514 1512,503 1520,494 1537,483 1553,472 1566,468 1579,461 1587,459"], ["r", "1587,459 1596,461"]];
const blue = "536,726 563,719 583,714 618,703 642,694 684,679 710,674 747,666 794,657 813,651 843,649 896,646 920,647 987,648 1040,649 1073,652 1107,655 1150,657 1163,658 1207,659 1232,661 1270,668 1290,673 1323,680 1373,679 1417,676 1450,669 1483,659 1507,648 1537,632 1573,615 1596,604";
const orange = "536,702 642,702 710,700 778,698 923,693 1020,688 1055,686 1320,686 1368,684 1418,682 1477,677 1537,671 1596,666";
const arrow = (x, y) => `<path d="M${x} ${y - 6}l5 6h-3v6h-4v-6h-3z" fill="#9a9a9a" stroke="#555"/>`;
const block = (x, y) => `<rect x="${x - 6}" y="${y - 3}" width="12" height="6" fill="#555" stroke="#111"/>`;
const left = (x, y) => `<path d="M${x + 2} ${y - 4}v8l-4-4z" fill="#333"/>`;
const right = (x, y) => `<path d="M${x - 2} ${y - 3}v6l4-3z" fill="#bbb" stroke="#666"/>`;
put("price",
  area("o", "rgba(253,250,50,.38)") + area("p", "rgba(255,150,150,.19)") +
  line("535,603 1200,603 1207,612 1596,612", "#9999ff", 5) + line("535,767.500 1200,767.500 1207,896 1596,896", "#9999ff", 5) +
  line(orange, "#ff9a00", 2, 'stroke-dasharray="7 6"') + candles +
  AVG.map(([c, p]) => line(p, c === "g" ? "#009a00" : "#ff0000", 4)).join("") +
  line(up.o, "#999900", 3) + line(lo.o, "#999900", 3) +
  line(blue, "#0000ff", 2, 'stroke-dasharray="5 5"') +
  line(up.p, "#ff9999", 4) + line(lo.p, "#ff9999", 4) +
  '<path d="M596 619l8 8M604 619l-8 8" stroke="#1a1a1a" stroke-width="4.500"/><path d="M597 620l6 6M603 620l-6 6" stroke="#666" stroke-width="1.500"/>' +
  arrow(1393, 658) + arrow(1435, 612) + block(1460, 506) + block(1561, 453) + left(605, 642) + left(1464, 522) + left(1565, 466) + right(1389, 639) + right(1431, 584));

// value axes
const tick = (y, w = 4, c = "#76919d") => `<path d="M1617 ${y + 0.5}h${w}" stroke="${c}"/>`;
const label = (y, t, bold) => tick(y) + `<text x="1623" y="${y + 4}"${bold ? ' font-weight="bold" font-size="12"' : ""}>${t}</text>`;
const tag = (y, t, c, w = 45) => `<rect x="1621.5" y="${y - 6.5}" width="${w}" height="14" fill="url(#tg)" stroke="#76919d"/><text x="1623" y="${y + 5}" fill="${c}">${t}</text>`;
const defs = '<defs><linearGradient id="tg" x2="0" y2="1"><stop stop-color="#f4f7fd"/><stop offset="1" stop-color="#c9d6f2"/></linearGradient></defs>';
put("axis1", defs + label(112, "62.500") + label(139, "62.000") + label(167, "61.500") + label(195, "61.000") + label(223, "60.500") + tick(102) + tag(103, "62.669", "#a4a4ac", 36));
put("axis2", label(238, "6") + label(266, "4") + label(295, "2") + tick(252, 2) + tick(281, 2) + tick(309, 2) + tick(324) + tag(320, "0", "#a4a4ac", 9));
let t3 = label(342, "11.600") + label(410, "11.400") + label(546, "11.000", 1) + label(681, "10.600") + label(749, "10.400") + label(817, "10.200") + label(884, "10.000", 1) + `<text x="1623" y="951">9.800</text>` + tick(952);
[376, 444, 478, 512, 579, 613, 647, 715, 783, 850, 918].forEach(y => { t3 += tick(y, 2); });
t3 += tick(422, 4, "#999900") + tick(461, 4, "#ff0000") + tick(463, 4, "#ff9999") + tick(484, 4, "#000") + tick(485, 4, "#000") + tick(604, 4, "#0000ff") + tick(612, 4, "#9999ff") + tick(666, 4, "#ff9a00") + tick(765, 4, "#ff9999") + tick(896, 4, "#9999ff");
t3 += tag(421, "11.364,6", "#999900") + tag(453, "11.250,3", "#f00000") + tag(461, "11.248,8", "#999900") + tag(468, "11.244,2", "#ff9999") + tag(485, "11.180,2", "#000") +
  '<rect x="1621" y="493" width="41" height="14" fill="#90ee90"/><text x="1623" y="504">26m42s</text>' +
  tag(600, "10.827,5", "#0000e8") + tag(615, "10.802,6", "#9999ff") + tag(665, "10.645,9", "#ff9a00") + tag(765, "10.353,4", "#ff9999") + tag(896, "9.966,9", "#9999ff", 39);
put("axis3", t3);

// time axis, positions relative to the pane width
const DAYS = [[583, 15], [634, 16], [685, 17], [735, 18], [786, 20], [845, 22], [895, 23], [946, 24], [996, 25], [1047, 27], [1106, 29], [1157, 30], [1207, "Dez"], [1258, "02"], [1308, "04"], [1367, "06"], [1418, "07"], [1468, "08"], [1519, "09"], [1570, 11]];
put("days", DAYS.map(([x, t]) => {
  const p = ((x - 535) / 11.38).toFixed(2) + "%";
  return `<line x1="${p}" x2="${p}" y1="0" y2="4" stroke="#76919d"/><text x="${p}" y="16" text-anchor="middle"${t === "Dez" ? ' font-weight="bold"' : ""}>${t}</text>`;
}).join(""));
```
